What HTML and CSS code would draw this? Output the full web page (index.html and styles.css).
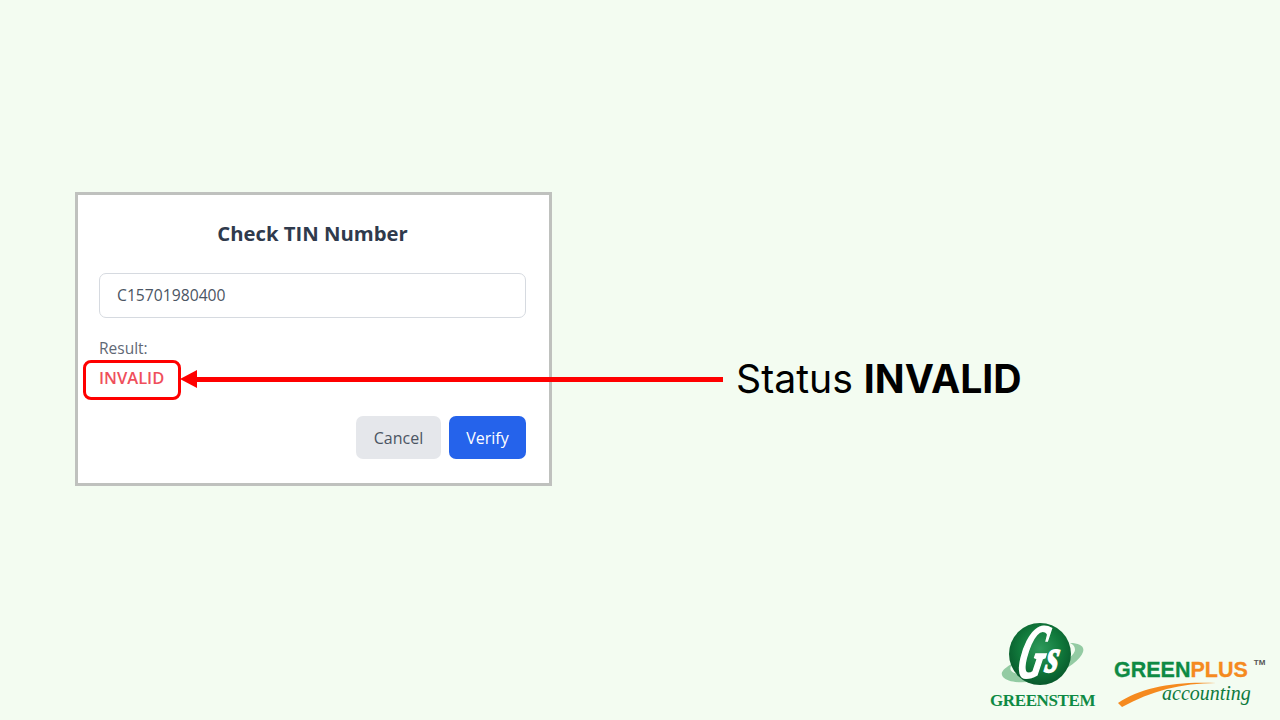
FILE: index.html
```html
<!DOCTYPE html>
<html lang="en">
<head>
<meta charset="utf-8">
<title>Check TIN Number</title>
<link rel="stylesheet" href="styles.css">
</head>
<body>
<main class="slide">
  <section class="dialog">
    <h1 class="title">Check TIN Number</h1>
    <div class="input">C15701980400</div>
    <div class="label">Result:</div>
    <div class="result">INVALID</div>
    <div class="actions">
      <button class="btn cancel">Cancel</button>
      <button class="btn verify">Verify</button>
    </div>
  </section>

  <div class="highlight"></div>
  <svg class="arrow" width="545" height="20" viewBox="0 0 545 20">
    <polygon points="0,10 17,1 17,19" fill="#ff0000"/>
    <rect x="16" y="8" width="527" height="5" fill="#ff0000"/>
  </svg>
  <p class="note">Status <b>INVALID</b></p>

  <footer class="logos">
    <div class="gs">
      <svg class="gs-mark" width="104" height="90" viewBox="0 0 104 90">
        <defs>
          <radialGradient id="ball" cx="50%" cy="42%" r="60%">
            <stop offset="0" stop-color="#2f9a5c"/>
            <stop offset="0.55" stop-color="#117a3c"/>
            <stop offset="1" stop-color="#07562a"/>
          </radialGradient>
        </defs>
        <path d="M80 21 C 89 21 95 24 93 30 C 91 37 78 47 60 55 C 40 62 19 62 13 55 C 9 50 15 46 23 41 C 18 47 20 51 30 52 C 50 54 84 38 85 28 C 85 25 84 23 80 21 Z" fill="#93cba3"/>
        <circle cx="50" cy="32" r="31" fill="url(#ball)"/>
        <text class="gs-g" transform="translate(25 55) skewX(-14) scale(0.78 1.65)">G</text>
        <text class="gs-s" transform="translate(54 50) skewX(-10) scale(1 1.4)">s</text>
      </svg>
      <div class="gs-name">GREENSTEM</div>
    </div>
    <div class="gp">
      <div class="gp-name">GREEN<span class="gp-plus">PLUS</span><sup class="gp-tm">TM</sup></div>
      <svg class="gp-swoosh" width="120" height="30" viewBox="0 0 120 30">
        <path d="M2 24 C 25 8 60 2 100 4 C 65 4 35 12 6 28 Z" fill="#f58a1f"/>
      </svg>
      <div class="gp-sub">accounting</div>
    </div>
  </footer>
</main>
</body>
</html>
```
FILE: styles.css
```css
* { box-sizing: border-box; }
html, body { margin: 0; padding: 0; }
body { width: 1280px; height: 720px; overflow: hidden; background: #f3fcf1; }

.slide {
  position: relative;
  width: 1280px;
  height: 720px;
  padding: 192px 0 0 75px;
  font-family: "Open Sans", "Noto Sans", sans-serif;
}

.dialog {
  width: 477px;
  height: 294px;
  background: #fff;
  border: 3px solid #bfc1be;
  padding: 0 23px 0 21px;
  display: flex;
  flex-direction: column;
}
.title {
  margin: 23px 0 0;
  height: 30px;
  line-height: 30px;
  font-size: 20.3px;
  font-weight: 700;
  text-align: center;
  color: #2f3a4c;
}
.input {
  margin-top: 25px;
  height: 45px;
  border: 1px solid #d6dae0;
  border-radius: 7px;
  padding-left: 17px;
  line-height: 43px;
  font-size: 15.7px;
  color: #4b5563;
}
.label {
  margin-top: 18px;
  height: 22px;
  line-height: 24px;
  font-size: 15.5px;
  color: #5f6875;
}
.result {
  margin-top: 9px;
  height: 22px;
  line-height: 22px;
  font-size: 16.5px;
  font-weight: 600;
  color: #ef4f5c;
}
.actions {
  margin-top: 27px;
  display: flex;
  justify-content: flex-end;
  gap: 8px;
}
.btn {
  height: 43px;
  border: 0;
  border-radius: 7px;
  font-family: inherit;
  font-size: 16px;
  padding: 0;
}
.cancel { width: 85px; background: #e5e7eb; color: #4b5563; }
.verify { width: 77px; background: #2563eb; color: #fff; font-weight: 500; }

.highlight {
  position: absolute;
  left: 83px;
  top: 360px;
  width: 98px;
  height: 40px;
  border: 3px solid #ff0000;
  border-radius: 8px;
}
.arrow { position: absolute; left: 180px; top: 369px; }
.note {
  position: absolute;
  left: 736px;
  top: 352px;
  margin: 0;
  line-height: 54px;
  font-family: Inter, "Noto Sans", sans-serif;
  font-size: 39.2px;
  color: #000;
}
.note b { font-weight: 700; }

.logos {
  position: absolute;
  left: 990px;
  top: 622px;
  display: flex;
  gap: 20px;
}
.gs { position: relative; width: 104px; height: 90px; }
.gs-mark { display: block; }
.gs-g, .gs-s {
  font-family: "Liberation Serif", serif;
  font-style: italic;
  font-weight: 700;
  fill: #fff;
  stroke: #fff;
}
.gs-g { font-size: 46px; stroke-width: 1.6px; }
.gs-s { font-size: 34px; stroke-width: 1px; }
.gs-name {
  position: absolute;
  left: 0;
  top: 68px;
  font-family: "Liberation Serif", serif;
  font-weight: 700;
  font-size: 17px;
  letter-spacing: -0.4px;
  line-height: 22px;
  color: #0e8a44;
  white-space: nowrap;
}
.gp { position: relative; width: 152px; padding-top: 35px; }
.gp-name {
  font-family: "Liberation Sans", sans-serif;
  font-weight: 700;
  font-size: 21.5px;
  line-height: 26px;
  color: #0e8a44;
  -webkit-text-stroke: 0.3px currentColor;
  white-space: nowrap;
}
.gp-plus { color: #f58a1f; }
.gp-tm {
  position: absolute;
  top: 37px;
  margin-left: 6px;
  font-size: 8px;
  line-height: 8px;
  color: #555;
  -webkit-text-stroke: 0;
}
.gp-swoosh { position: absolute; left: 2px; top: 57px; }
.gp-sub {
  position: absolute;
  left: 48px;
  top: 59px;
  font-family: "Liberation Serif", serif;
  font-style: italic;
  font-size: 20px;
  line-height: 24px;
  color: #0e7a3d;
}
```
